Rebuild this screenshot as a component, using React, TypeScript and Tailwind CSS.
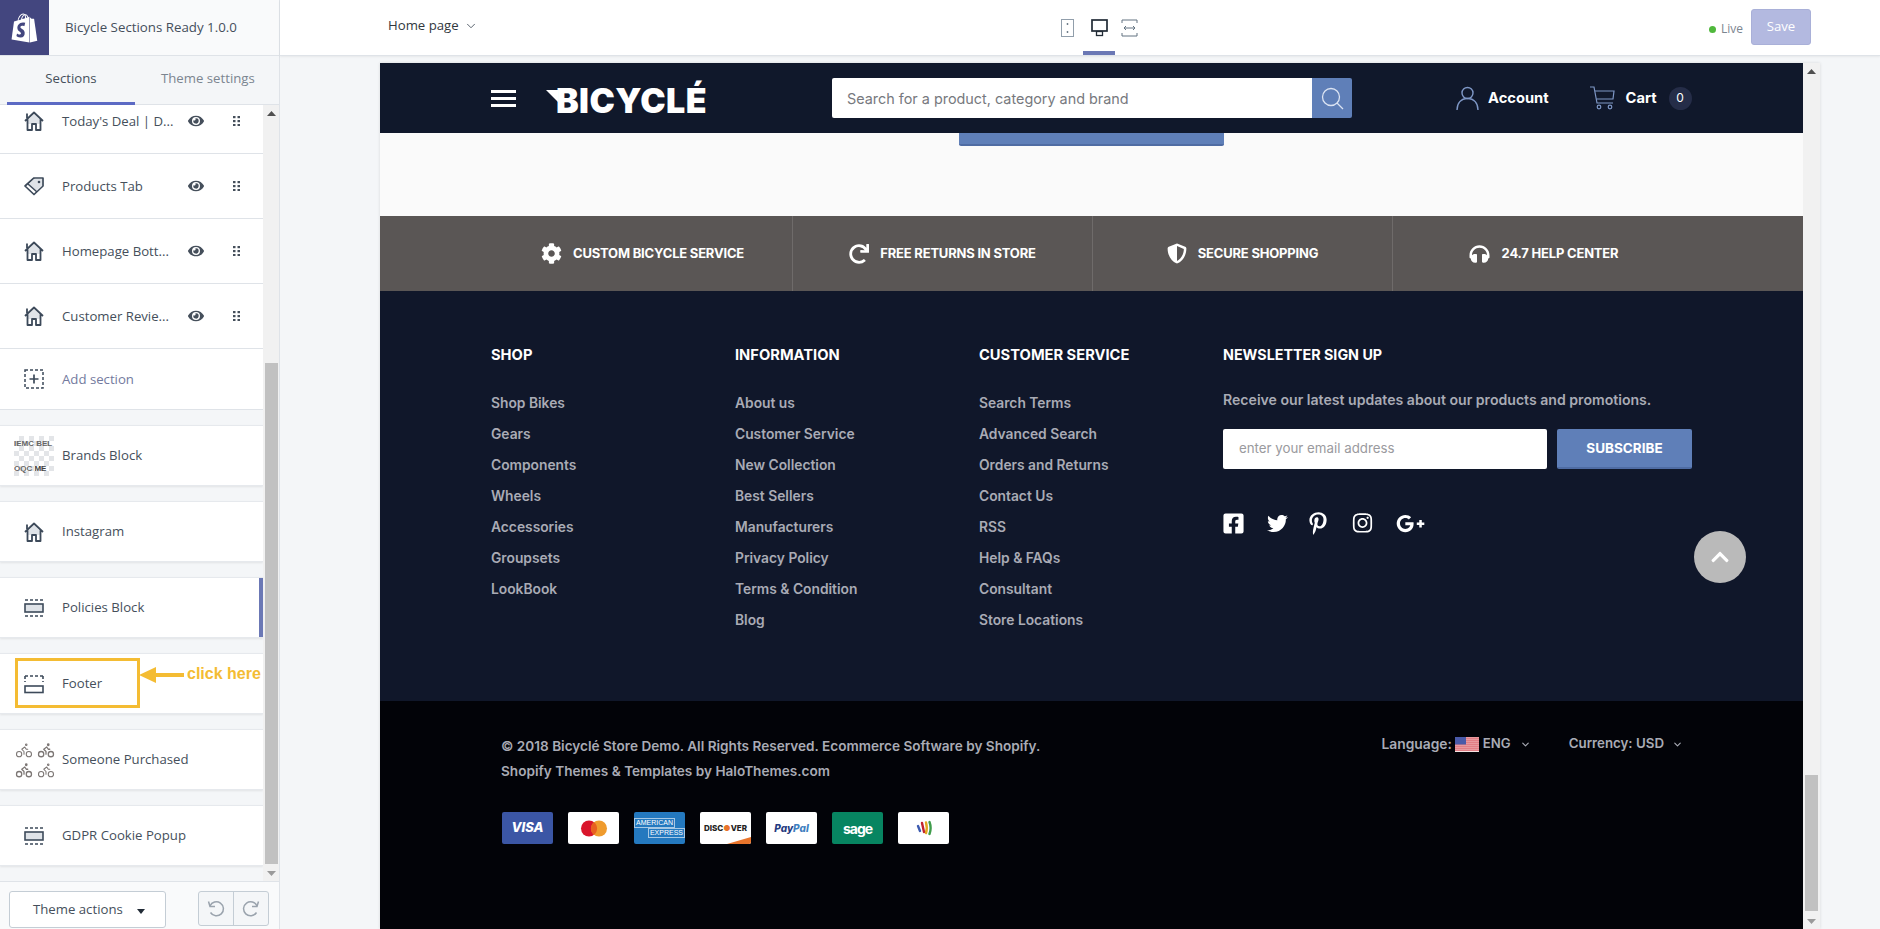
import React from "react";
import { FaCog, FaRedo, FaShieldAlt, FaHeadphones, FaFacebookSquare, FaTwitter, FaPinterestP, FaInstagram, FaGooglePlusG, FaChevronUp, FaShopify, FaEye } from "react-icons/fa";
import { ChevronDown, Bike } from "lucide-react";

const Home = () => (
  <svg width="20" height="20" viewBox="0 0 20 20" className="shrink-0">
    <path d="M4 9 L10 3 L16 9 V13 H4 Z" fill="#dfe3e8" />
    <path d="M3 2.5V7M1 10 L10 1.5 L19 10M3.5 8 V19 H8 V13 H12 V19 H16.5 V8" fill="none" stroke="#3d4a5a" strokeWidth="1.8" strokeLinejoin="round" />
  </svg>
);
const Tag = () => (
  <svg width="20" height="20" viewBox="0 0 20 20" className="shrink-0">
    <path d="M1 10 L10 2 H19 V10 L10 18.5 Z" fill="#fff" stroke="#3d4a5a" strokeWidth="1.7" strokeLinejoin="round" />
    <path d="M4 9 L10 3 H18 V9.500 L12.500 15 Z" fill="#dfe3e8" />
    <path d="M4 8 L13 16" stroke="#3d4a5a" strokeWidth="1.5" />
    <circle cx="15" cy="6" r="1.300" fill="#3d4a5a" />
  </svg>
);
const Band = ({ kind }: { kind: "middle" | "bottom" }) => (
  <svg width="20" height="20" viewBox="0 0 20 20" className="shrink-0">
    {kind === "middle" ? (
      <>
        <path d="M1 2H19M1 18H19" stroke="#3d4a5a" strokeWidth="1.6" strokeDasharray="3 2" />
        <rect x="1" y="6" width="18" height="8" fill="#dfe3e8" stroke="#3d4a5a" strokeWidth="1.6" />
      </>
    ) : (
      <>
        <path d="M1 2H19M1 2V8M19 2V8" stroke="#3d4a5a" strokeWidth="1.6" strokeDasharray="3 2" fill="none" />
        <rect x="1" y="12" width="18" height="6.500" fill="#fff" stroke="#3d4a5a" strokeWidth="1.6" />
      </>
    )}
  </svg>
);
const Drag = () => (
  <svg width="7" height="10" viewBox="0 0 7 10" className="shrink-0">
    {[0, 4, 8].map((y) => (
      <g key={y} fill="#454f5b">
        <rect x="0" y={y} width="2.500" height="2.200" />
        <rect x="4.500" y={y} width="2.500" height="2.200" />
      </g>
    ))}
  </svg>
);
const Up = ({ className = "" }: { className?: string }) => (
  <svg width="9" height="5" viewBox="0 0 9 5" className={className}><path d="M4.500 0 L9 5 H0 Z" fill="currentColor" /></svg>
);

const Slot = ({ children }: { children: React.ReactNode }) => (
  <div className="w-[62px] shrink-0 pl-[24px] flex items-center">{children}</div>
);

const Row = ({ icon, text }: { icon: React.ReactNode; text: string }) => (
  <div className="h-[65px] flex items-center bg-white border-b border-[#dfe3e8]">
    <Slot>{icon}</Slot>
    <span className="pt-[1px] text-[13.200px] text-[#454f5b] w-[118px] whitespace-nowrap">{text}</span>
    <FaEye className="ml-[8px] text-[#454f5b] w-[16px] h-[16px]" />
    <div className="ml-[29px]"><Drag /></div>
  </div>
);

const Card = ({ children }: { children: React.ReactNode }) => (
  <div className="relative overflow-hidden h-[61px] mt-[15px] flex items-center bg-white border-y border-[#e6e9ed] shadow-[0_1px_2px_rgba(0,0,0,0.08)]">
    {children}
  </div>
);
const CardText = ({ children }: { children: React.ReactNode }) => (
  <span className="text-[13.200px] text-[#454f5b] whitespace-nowrap">{children}</span>
);

const Sidebar = () => (
  <aside className="w-[280px] shrink-0 flex flex-col border-r border-[#dfe3e8] bg-[#f4f6f8] font-['Open_Sans',sans-serif]">
    <div className="h-[56px] shrink-0 flex items-stretch bg-[#f9fafb] border-b border-[#dfe3e8]">
      <div className="w-[49px] bg-[#43467f] flex items-center justify-center">
        <FaShopify className="text-white w-[27px] h-[30px]" />
      </div>
      <span className="ml-[16px] self-center text-[13.300px] text-[#454f5b] whitespace-nowrap">Bicycle Sections Ready 1.0.0</span>
    </div>
    <div className="h-[49px] shrink-0 flex border-b border-[#dfe3e8] pl-[7px]">
      <div className="w-[128px] flex items-center justify-center border-b-[3px] border-[#5c6ac4] text-[13.200px] text-[#454f5b] mb-[-1px]">Sections</div>
      <div className="flex-1 flex items-center pl-[26px] pb-[3px] text-[13.200px] text-[#7b8590] whitespace-nowrap">Theme settings</div>
    </div>
    <div className="flex-1 min-h-0 flex">
      <div className="w-[263px] shrink-0 overflow-hidden">
        <div className="mt-[-16px]">
          <Row icon={<Home />} text="Today's Deal | D..." />
          <Row icon={<Tag />} text="Products Tab" />
          <Row icon={<Home />} text="Homepage Bott..." />
          <Row icon={<Home />} text="Customer Revie..." />
          <div className="h-[61px] flex items-center bg-white border-b border-[#dfe3e8]">
            <Slot>
              <svg width="20" height="20" viewBox="0 0 20 20">
                <rect x="1" y="1" width="18" height="18" fill="none" stroke="#3d4a5a" strokeWidth="1.5" strokeDasharray="3 2" />
                <path d="M10 5.500V14.500M5.500 10H14.500" stroke="#3d4a5a" strokeWidth="1.7" />
              </svg>
            </Slot>
            <span className="pt-[1px] text-[13.200px] text-[#737a9e]">Add section</span>
          </div>
          <Card>
            <div className="w-[62px] shrink-0 pl-[14px]">
              <div className="w-[40px] h-[40px] bg-[repeating-conic-gradient(#e3e5e8_0_25%,#ffffff_0_50%)] bg-[length:10px_10px] flex flex-col justify-between overflow-hidden text-[8px] leading-[11px] font-bold text-[#666] py-[2px] font-['Liberation_Sans',sans-serif]">
                <span className="whitespace-nowrap">IEMC BEL</span>
                <span className="whitespace-nowrap">OQC <b className="text-[#444]">ME</b></span>
              </div>
            </div>
            <CardText>Brands Block</CardText>
          </Card>
          <Card>
            <Slot><Home /></Slot>
            <CardText>Instagram</CardText>
          </Card>
          <Card>
            <Slot><Band kind="middle" /></Slot>
            <CardText>Policies Block</CardText>
            <div className="absolute right-0 inset-y-0 w-[4px] bg-[#6b78b5]" />
          </Card>
          <Card>
            <Slot><Band kind="bottom" /></Slot>
            <CardText>Footer</CardText>
            <div className="absolute left-[15px] top-[4px] w-[125px] h-[50px] border-[3px] border-[#f4bc33]" />
            <svg width="46" height="20" viewBox="0 0 46 20" className="absolute left-[139px] top-[11px]">
              <path d="M0 10 L17 2 V8 H45 V12 H17 V18 Z" fill="#f4bc33" />
            </svg>
            <span className="absolute left-[187px] top-[8px] text-[16px] font-bold text-[#f4bc33] whitespace-nowrap font-['Liberation_Sans',sans-serif]">click here</span>
          </Card>
          <Card>
            <div className="w-[62px] shrink-0 pl-[15px]">
              <div className="grid grid-cols-2 w-[40px] gap-x-[3px] gap-y-[2px] text-[#7c7674]">
                <Bike size={18} strokeWidth={1.4} /><Bike size={18} strokeWidth={1.7} /><Bike size={18} strokeWidth={1.7} /><Bike size={18} strokeWidth={1.4} />
              </div>
            </div>
            <CardText>Someone Purchased</CardText>
          </Card>
          <Card>
            <Slot><Band kind="middle" /></Slot>
            <CardText>GDPR Cookie Popup</CardText>
          </Card>
        </div>
      </div>
      <div className="flex-1 bg-[#f1f1f1] flex flex-col items-center text-[#505050]">
        <div className="h-[16px] flex items-center"><Up /></div>
        <div className="flex-1 w-[13px] pt-[242px]">
          <div className="h-[501px] bg-[#c1c1c1]" />
        </div>
        <div className="h-[16px] flex items-center text-[#9a9a9a]"><Up className="rotate-180" /></div>
      </div>
    </div>
    <div className="h-[48px] shrink-0 border-t border-[#dfe3e8] bg-[#f9fafb] flex items-start pt-[9px] pl-[9px]">
      <div className="w-[157px] h-[37px] bg-white border border-[#c4cdd5] rounded-[3px] flex items-center pl-[23px] text-[13.200px] text-[#454f5b] whitespace-nowrap">
        Theme actions
        <svg width="8" height="5" viewBox="0 0 8 5" className="ml-[14px] mt-[4px]"><path d="M0 0H8L4 5Z" fill="#212b36" /></svg>
      </div>
      <div className="ml-[32px] w-[71px] h-[35px] flex border border-[#c4cdd5] rounded-[3px] bg-[#f4f6f8] text-[#9aa3ad]">
        <div className="flex-1 flex items-center justify-center border-r border-[#c4cdd5]">
          <svg width="18" height="18" viewBox="0 0 18 18" fill="none" stroke="currentColor" strokeWidth="1.500"><path d="M3 6 A7 7 0 1 1 3.500 12.500" /><path d="M1.500 1.500 L3 6.500 H8" /></svg>
        </div>
        <div className="flex-1 flex items-center justify-center">
          <svg width="18" height="18" viewBox="0 0 18 18" fill="none" stroke="currentColor" strokeWidth="1.500"><path d="M15 6 A7 7 0 1 0 14.500 12.500" /><path d="M16.500 1.500 L15 6.500 H10" /></svg>
        </div>
      </div>
    </div>
  </aside>
);

const TopBar = () => (
  <div className="relative z-10 h-[56px] shrink-0 bg-white border-b border-[#dfe3e8] shadow-[0_1px_2px_rgba(0,0,0,0.06)] flex items-start font-['Open_Sans',sans-serif]">
    <div className="ml-[108px] mt-[16px] flex items-center text-[13.200px] text-[#31373d] whitespace-nowrap">
      Home page
      <ChevronDown size={14} strokeWidth={1.5} className="ml-[5px] text-[#454f5b]" />
    </div>
    <div className="ml-[582px] mt-[19px] w-[16px] h-[18px]">
      <svg width="16" height="18" viewBox="0 0 16 18"><rect x="1.500" y="0.500" width="12" height="17" fill="none" stroke="#919eab" /><circle cx="7.500" cy="5" r="0.900" fill="#637381" /><circle cx="7.500" cy="13" r="0.900" fill="#637381" /></svg>
    </div>
    <div className="relative ml-[7px] w-[32px] h-[55px]">
      <svg width="18" height="18" viewBox="0 0 18 18" className="absolute left-[8px] top-[19px]"><rect x="1" y="1" width="15" height="11" fill="none" stroke="#212b36" strokeWidth="1.700" /><rect x="5.500" y="12.500" width="6" height="4" fill="none" stroke="#212b36" strokeWidth="1.300" /></svg>
      <div className="absolute bottom-0 inset-x-0 h-[4px] bg-[#6b78b5]" />
    </div>
    <div className="ml-[6px] mt-[19px]">
      <svg width="17" height="18" viewBox="0 0 17 18" fill="none" stroke="#637381"><path d="M1 4V1H16V4M1 14V17H16V14" /><path d="M3 9H14M5 7L3 9L5 11M12 7L14 9L12 11" /></svg>
    </div>
    <div className="flex-1" />
    <div className="mt-[20px] flex items-center text-[12px] text-[#7b8590]">
      <span className="w-[7px] h-[7px] rounded-full bg-[#50b83c] mr-[5px]" />Live
    </div>
    <div className="ml-[8px] mr-[69px] mt-[9px] w-[60px] h-[36px] rounded-[3px] bg-[#b3b9e0] border border-[#a9b0d8] flex items-center justify-center text-[13.200px] text-white">Save</div>
  </div>
);

const shop = ["Shop Bikes", "Gears", "Components", "Wheels", "Accessories", "Groupsets", "LookBook"];
const info = ["About us", "Customer Service", "New Collection", "Best Sellers", "Manufacturers", "Privacy Policy", "Terms & Condition", "Blog"];
const care = ["Search Terms", "Advanced Search", "Orders and Returns", "Contact Us", "RSS", "Help & FAQs", "Consultant", "Store Locations"];

const LinkColumn = ({ title, links }: { title: string; links: string[] }) => (
  <div className="w-[244px] shrink-0">
    <h3 className="h-[24px] leading-[24px] text-[14.700px] font-bold text-white">{title}</h3>
    <ul className="mt-[20px]">
      {links.map((l) => (
        <li key={l} className="h-[31px] leading-[32px] text-[13.800px] font-semibold text-[#a9abb5] whitespace-nowrap">{l}</li>
      ))}
    </ul>
  </div>
);

const Policy = ({ icon, text, last }: { icon: React.ReactNode; text: string; last?: boolean }) => (
  <div className={`w-[300px] shrink-0 flex items-center justify-center gap-[11px] ${last ? "" : "border-r border-[#6f6b6a]"}`}>
    {icon}
    <span className="text-[13px] font-bold tracking-[-0.2px] text-white whitespace-nowrap">{text}</span>
  </div>
);

const Pay = ({ className = "", children }: { className?: string; children: React.ReactNode }) => (
  <div className={`relative overflow-hidden w-[51px] h-[32px] rounded-[2px] flex items-center justify-center ${className}`}>{children}</div>
);

const Page = () => (
  <div className="relative flex-1 min-w-0 overflow-hidden font-['Inter',sans-serif]">
    <header className="h-[70px] bg-[#10182b] flex items-center pl-[111px]">
      <div className="w-[25px] flex flex-col gap-[4px]">
        <div className="h-[3px] bg-white" /><div className="h-[3px] bg-white" /><div className="h-[3px] bg-white" />
      </div>
      <div className="ml-[30px] w-[161px] flex items-center mt-[5px]">
        <svg width="12" height="26" viewBox="0 0 12 26" className="shrink-0 mt-[1px]"><path d="M0 2H12V14Z" fill="#fff" /></svg>
        <span className="ml-[-2px] text-[34px] leading-[40px] font-black tracking-[0.4px] text-white whitespace-nowrap">BICYCLÉ</span>
      </div>
      <div className="ml-[125px] w-[520px] h-[40px] rounded-[2px] overflow-hidden flex">
        <div className="flex-1 bg-white pl-[15px] pt-[1px] flex items-center text-[14.400px] text-[#77797e] whitespace-nowrap">Search for a product, category and brand</div>
        <div className="w-[40px] bg-[#5f7fb8] flex items-center justify-center">
          <svg width="26" height="26" viewBox="0 0 26 26" fill="none" stroke="#dbe3f2" strokeWidth="1.300"><circle cx="12" cy="12" r="8.500" /><path d="M18 18L24 24" /></svg>
        </div>
      </div>
      <svg width="23" height="24" viewBox="0 0 23 24" fill="none" stroke="#7e97c6" strokeWidth="1.400" className="ml-[104px]"><circle cx="11.500" cy="7" r="5.500" /><path d="M1 24C1 17 5 12.500 11.500 12.500S22 17 22 24" /></svg>
      <span className="ml-[9px] text-[14.700px] font-bold text-white">Account</span>
      <svg width="25" height="24" viewBox="0 0 25 24" fill="none" stroke="#7e97c6" strokeWidth="1.200" className="ml-[41px]"><path d="M0 1H4L7 17H23" /><path d="M5 5H24L23 13H6.500" /><circle cx="9" cy="21" r="1.800" /><circle cx="20" cy="21" r="1.800" /></svg>
      <span className="ml-[11px] text-[14.700px] font-bold text-white">Cart</span>
      <span className="ml-[12px] w-[23px] h-[23px] rounded-full bg-[#252d48] flex items-center justify-center text-[12px] text-white">0</span>
    </header>

    <section className="h-[83px] bg-[#fafafa]">
      <div className="ml-[579px] w-[265px] h-[13px] bg-[#5f7fb8] border-b-[2px] border-[#4f6ca3] rounded-b-[2px]" />
    </section>

    <section className="h-[75px] bg-[#5a5655] flex pl-[113px]">
      <Policy icon={<FaCog className="text-white w-[21px] h-[21px]" />} text="CUSTOM BICYCLE SERVICE" />
      <Policy icon={<FaRedo className="text-white w-[20px] h-[20px]" />} text="FREE RETURNS IN STORE" />
      <Policy icon={<FaShieldAlt className="text-white w-[20px] h-[21px]" />} text="SECURE SHOPPING" />
      <Policy last icon={<FaHeadphones className="text-white w-[23px] h-[20px]" />} text="24.7 HELP CENTER" />
    </section>

    <footer className="h-[410px] bg-[#10172a] pt-[52px] pl-[111px] flex">
      <LinkColumn title="SHOP" links={shop} />
      <LinkColumn title="INFORMATION" links={info} />
      <LinkColumn title="CUSTOMER SERVICE" links={care} />
      <div className="w-[469px]">
        <h3 className="h-[24px] leading-[24px] text-[14.300px] font-bold text-white">NEWSLETTER SIGN UP</h3>
        <p className="mt-[21px] h-[24px] leading-[24px] text-[14.100px] font-semibold text-[#a9abb5] whitespace-nowrap">Receive our latest updates about our products and promotions.</p>
        <div className="mt-[17px] flex gap-[10px]">
          <div className="w-[324px] h-[40px] bg-white rounded-[2px] pl-[16px] flex items-center text-[13.300px] text-[#9a9a9e]">enter your email address</div>
          <div className="w-[135px] h-[40px] bg-[#5f7fb8] border-b-[2px] border-[#4f6ca3] rounded-[2px] flex items-center justify-center text-[13.500px] font-bold text-white">SUBSCRIBE</div>
        </div>
        <div className="mt-[42px] h-[24px] flex items-center text-white">
          <FaFacebookSquare className="w-[21px] h-[23px]" />
          <FaTwitter className="ml-[23px] w-[21px] h-[21px]" />
          <FaPinterestP className="ml-[21px] w-[18px] h-[23px]" />
          <FaInstagram className="ml-[25px] w-[21px] h-[22px]" />
          <FaGooglePlusG className="ml-[22px] w-[31px] h-[23px]" />
        </div>
      </div>
    </footer>

    <section className="h-[300px] bg-[#020308] pt-[33px] pl-[121px] pr-[120px] flex justify-between items-start">
      <div>
        <p className="leading-[25px] text-[13.600px] font-semibold text-[#a9abb5] whitespace-nowrap">© 2018 Bicyclé Store Demo. All Rights Reserved. Ecommerce Software by Shopify.</p>
        <p className="leading-[25px] text-[13.600px] font-semibold text-[#a9abb5] whitespace-nowrap">Shopify Themes &amp; Templates by HaloThemes.com</p>
        <div className="mt-[28px] ml-[1px] flex gap-[15px]">
          <Pay className="bg-[#3b56a5] text-white italic font-extrabold text-[13px]">VISA</Pay>
          <Pay className="bg-white">
            <svg width="28" height="17" viewBox="0 0 28 17"><circle cx="9" cy="8.500" r="8" fill="#d9152b" /><circle cx="19" cy="8.500" r="8" fill="#ef9b2d" /><path d="M14 2.200A8 8 0 0 1 14 14.800A8 8 0 0 1 14 2.200Z" fill="#e8601f" /></svg>
          </Pay>
          <Pay className="bg-[#2479bf] flex-col text-white text-[7px] leading-[8px] font-['Liberation_Sans',sans-serif]">
            <span className="self-start border border-white/60 px-[1px]">AMERICAN</span>
            <span className="self-end border border-white/60 px-[1px]">EXPRESS</span>
          </Pay>
          <Pay className="bg-white text-[8px] font-extrabold text-[#222]">
            DISC<span className="text-[#e8742b]">●</span>VER
            <div className="absolute right-0 bottom-0 w-[24px] h-[7px] bg-[#e8742b] [clip-path:polygon(100%_0,100%_100%,0_100%)]" />
          </Pay>
          <Pay className="bg-white italic font-extrabold text-[10px] text-[#253b80]">Pay<span className="text-[#3f7fc0]">Pal</span></Pay>
          <Pay className="bg-[#078561] text-white font-bold text-[14px] tracking-[-1px]">sage</Pay>
          <Pay className="bg-white">
            <svg width="16" height="16" viewBox="0 0 16 16" fill="none" strokeWidth="2.400" strokeLinecap="round"><path d="M2 6L4 11" stroke="#3d5bb0" /><path d="M6 3L8 12" stroke="#c2242f" /><path d="M10 2.500C11 6 11 10 10 13" stroke="#e2a71f" /><path d="M13.500 2C15 6 15 10 13.500 14" stroke="#3f9c4b" /></svg>
          </Pay>
        </div>
      </div>
      <div className="mt-[1px] flex items-center text-[13.800px] font-semibold text-[#a9abb5] h-[18px] whitespace-nowrap">
        Language:
        <svg width="24" height="15" viewBox="0 0 24 15" className="ml-[3px]">
          <rect width="24" height="15" fill="#f6e3e3" />
          {[0, 2, 4, 6, 8, 10, 12].map((y) => <rect key={y} y={y + 0.5} width="24" height="1.200" fill="#d9535d" />)}
          <rect width="11" height="7.500" fill="#4a5aa8" />
        </svg>
        <span className="ml-[4px] text-[13.200px]">ENG</span>
        <ChevronDown size={11} strokeWidth={2.500} className="ml-[9px]" />
        <span className="ml-[38px] text-[13.300px]">Currency: USD</span>
        <ChevronDown size={11} strokeWidth={2.500} className="ml-[8px]" />
      </div>
    </section>

    <div className="absolute left-[1314px] top-[468px] w-[52px] h-[52px] rounded-full bg-[#bababa] flex items-center justify-center">
      <FaChevronUp className="text-white w-[20px] h-[20px]" />
    </div>
  </div>
);

export default function App() {
  return (
    <div className="w-[1880px] h-[929px] overflow-hidden flex bg-[#f4f6f8]">
      <Sidebar />
      <div className="flex-1 min-w-0 flex flex-col">
        <TopBar />
        <div className="flex-1 min-h-0 pt-[7px] pl-[100px] pr-[60px]">
          <div className="h-full flex bg-white shadow-[0_0_3px_rgba(0,0,0,0.12)]">
            <Page />
            <div className="w-[17px] shrink-0 bg-[#f1f1f1] flex flex-col items-center text-[#505050]">
              <div className="h-[16px] flex items-center"><Up /></div>
              <div className="flex-1 pt-[696px] w-[13px]"><div className="h-[136px] bg-[#c1c1c1]" /></div>
              <div className="h-[16px] flex items-center text-[#9a9a9a]"><Up className="rotate-180" /></div>
            </div>
          </div>
        </div>
      </div>
    </div>
  );
}
